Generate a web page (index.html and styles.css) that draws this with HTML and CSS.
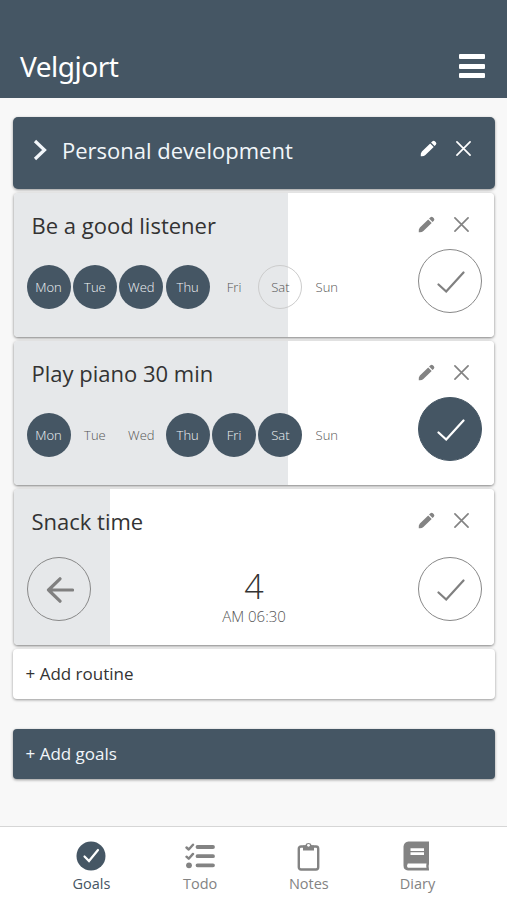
FILE: index.html
```html
<!DOCTYPE html>
<html lang="en">
<head>
<meta charset="utf-8">
<title>Velgjort</title>
<link rel="stylesheet" href="styles.css">
</head>
<body>
<svg class="symbols" aria-hidden="true">
  <symbol id="pencil" viewBox="0 0 18 18"><path d="M.8 17.200Q.4 14 2 12.300L10.800 3.600l3.700 3.700L5.700 16Q4 17.600.8 17.200zM11.700 2.700l1.500-1.500q1.300-1 2.500 0l1.100 1.100q1.100 1.300 0 2.600l-1.400 1.500z" fill="currentColor"/></symbol>
  <symbol id="close" viewBox="0 0 16 16"><path d="M1 1l14 14M15 1L1 15" fill="none" stroke="currentColor" stroke-width="1.800" stroke-linecap="round"/></symbol>
  <symbol id="check" viewBox="0 0 28 22"><path d="M1.500 13.500l7.700 7L26.500 1.500" fill="none" stroke="currentColor" stroke-width="2.200" stroke-linecap="round"/></symbol>
</svg>
<header class="topbar">
  <h1 class="brand">Velgjort</h1>
  <button class="menu" aria-label="Menu"><i></i><i></i><i></i></button>
</header>
<main class="content">
  <section class="goal">
    <svg class="chevron" viewBox="0 0 14 22"><path d="M2 2l9.500 9L2 20" fill="none" stroke="currentColor" stroke-width="3.200"/></svg>
    <h2 class="goal-title">Personal development</h2>
    <div class="actions"><svg class="pencil"><use href="#pencil"/></svg><svg class="close"><use href="#close"/></svg></div>
  </section>

  <article class="card p60">
    <div class="card-head"><h3>Be a good listener</h3><div class="actions"><svg class="pencil"><use href="#pencil"/></svg><svg class="close"><use href="#close"/></svg></div></div>
    <div class="card-body">
      <div class="week"><span class="day on">Mon</span><span class="day on">Tue</span><span class="day on">Wed</span><span class="day on">Thu</span><span class="day">Fri</span><span class="day today">Sat</span><span class="day">Sun</span></div>
      <div class="round"><svg class="check"><use href="#check"/></svg></div>
    </div>
  </article>

  <article class="card p60">
    <div class="card-head"><h3>Play piano 30 min</h3><div class="actions"><svg class="pencil"><use href="#pencil"/></svg><svg class="close"><use href="#close"/></svg></div></div>
    <div class="card-body">
      <div class="week"><span class="day on">Mon</span><span class="day">Tue</span><span class="day">Wed</span><span class="day on">Thu</span><span class="day on">Fri</span><span class="day on">Sat</span><span class="day">Sun</span></div>
      <div class="round done"><svg class="check"><use href="#check"/></svg></div>
    </div>
  </article>

  <article class="card counter p20">
    <div class="card-head"><h3>Snack time</h3><div class="actions"><svg class="pencil"><use href="#pencil"/></svg><svg class="close"><use href="#close"/></svg></div></div>
    <div class="card-body">
      <div class="round"><svg class="back" viewBox="0 0 28 26"><path d="M14 1.800L2.500 13 14 24.200M2.500 13H26.500" fill="none" stroke="currentColor" stroke-width="3.200" stroke-linecap="round" stroke-linejoin="round"/></svg></div>
      <div class="count"><strong>4</strong><span>AM 06:30</span></div>
      <div class="round"><svg class="check"><use href="#check"/></svg></div>
    </div>
  </article>

  <button class="add">+ Add routine</button>
  <button class="add add-goal">+ Add goals</button>
</main>
<nav class="tabs">
  <a class="tab active"><svg viewBox="0 0 30 30"><circle cx="15" cy="15" r="14.500" fill="currentColor"/><path d="M8.500 15.500l4.500 4.500 9-11" fill="none" stroke="#fff" stroke-width="2.200" stroke-linecap="round"/></svg><span>Goals</span></a>
  <a class="tab"><svg viewBox="0 0 30 30"><g fill="none" stroke="currentColor" stroke-linecap="round" stroke-linejoin="round"><path d="M12.500 6H28M12.500 15.200H28M12.500 24.300H28" stroke-width="3.800"/><path d="M1.500 6.500l2.200 2L8 3.700M1.500 15.700l2.200 2L8 12.900" stroke-width="2.400"/></g><circle cx="4" cy="24.300" r="2.900" fill="currentColor"/></svg><span>Todo</span></a>
  <a class="tab"><svg viewBox="0 0 30 30"><rect x="4.800" y="5.500" width="19.400" height="23" rx="2.200" fill="none" stroke="currentColor" stroke-width="2.400"/><path d="M9 4.500h2.200a3.500 3.700 0 0 1 6.600 0h2.200v5h-11z" fill="currentColor"/><circle cx="14.500" cy="4.300" r="1.400" fill="#fff"/></svg><span>Notes</span></a>
  <a class="tab"><svg viewBox="0 0 30 30"><path d="M5.500.5H26v22.500q-.8 1.500 0 5.500v1H5q-4.500-.5-4.500-5V5.500q.5-4.500 5-5z" fill="currentColor"/><path d="M4.800 22.500h18.700q-.5 2.200 0 4.300H4.800q-1.500-2.100 0-4.300zM7.500 7.300h13.500v2.700H7.500zM7.500 11.200h13.500v2.700H7.500z" fill="#fff"/></svg><span>Diary</span></a>
</nav>
</body>
</html>
```
FILE: styles.css
```css
* { box-sizing: border-box; }
body {
  margin: 0;
  height: 900px;
  display: flex;
  flex-direction: column;
  overflow: hidden;
  background: #f8f8f8;
  color: #333;
  font-family: "Open Sans", sans-serif;
}
h1, h2, h3 { margin: 0; font-weight: 400; white-space: nowrap; }
button { border: 0; padding: 0; font: inherit; text-align: left; }
svg { display: block; flex: none; }
.symbols { display: none; }

.topbar {
  height: 98px;
  flex: none;
  background: #455664;
  color: #fff;
  display: flex;
  justify-content: space-between;
  align-items: flex-start;
  padding: 48px 22px 0 20px;
}
.brand { font: 400 28px/36px "Noto Sans", sans-serif; letter-spacing: -0.500px; }
.menu { background: none; width: 26px; display: flex; flex-direction: column; gap: 4.500px; margin-top: 6px; }
.menu i { height: 5px; border-radius: 1px; background: #fff; }

.content { flex: 1; display: flex; flex-direction: column; gap: 4px; padding: 19px 12px 0 13px; }
.goal {
  height: 72px;
  background: #455664;
  color: #f2f6fa;
  border-radius: 5px;
  box-shadow: 0 1px 3px rgba(0,0,0,.4);
  display: flex;
  align-items: flex-start;
  padding: 17px 24px 0 20px;
}
.chevron { width: 14px; height: 22px; margin-top: 5px; }
.goal-title { font-size: 22px; line-height: 32px; margin-left: 15px; flex: 1; }
.actions { display: flex; align-items: center; color: #838383; }
.goal .actions { color: #fff; margin-top: 6px; }
.pencil { width: 17px; height: 17px; }
.close { width: 15px; height: 15px; margin-left: 19px; }

.card {
  height: 144px;
  margin: 0 1px;
  border-radius: 4px;
  background: #fff;
  box-shadow: 0 1px 3px rgba(0,0,0,.5);
}
.p60 { background: linear-gradient(to right, #e6e8ea 274.500px, #fff 274.500px); }
.p20 { background: linear-gradient(to right, #e6e8ea 96px, #fff 96px); }
.counter { height: 156px; }
.card-head { display: flex; justify-content: space-between; align-items: flex-start; padding: 16px 25px 0 17.500px; height: 56px; }
.card-head .actions { margin-top: 7px; }
h3 { font-size: 22px; line-height: 32px; }
.card-body { display: flex; justify-content: space-between; align-items: flex-start; padding: 0 12.500px 0 12.500px; }
.counter .card-body { padding-top: 12px; }
.week { display: flex; gap: 2.400px; padding-top: 16px; }
.day {
  width: 44px;
  height: 44px;
  border-radius: 50%;
  font-size: 13px;
  font-weight: 300;
  line-height: 44px;
  text-align: center;
  color: #555;
}
.on { background: #455664; color: #f0f3f5; }
.today { border: 1px solid #ccc; line-height: 42px; }
.round {
  width: 64px;
  height: 64px;
  border: 1px solid #888;
  border-radius: 50%;
  display: grid;
  place-items: center;
  color: #808080;
}
.done { background: #455664; border-color: #455664; color: #fff; }
.check { width: 28px; height: 22px; margin: 1px 0 0 2px; }
.back { width: 28px; height: 26px; margin: 2px 0 0 2px; }
.count { display: flex; flex-direction: column; align-items: center; padding-top: 10px; }
.count strong { font-size: 34px; line-height: 38px; font-weight: 300; color: #333; }
.count span { font-size: 15px; line-height: 22px; font-weight: 300; color: #555; }

.add {
  height: 50px;
  padding: 0 12.500px 1px;
  border-radius: 4px;
  background: #fff;
  color: #333;
  font-size: 17px;
  box-shadow: 0 1px 3px rgba(0,0,0,.4);
}
.add-goal { margin-top: 26px; background: #455664; color: #f2f6fa; }

.tabs {
  height: 74px;
  flex: none;
  background: #fff;
  border-top: 1px solid #d6d6d6;
  display: grid;
  grid-template-columns: repeat(4, 108.700px);
  justify-content: center;
  padding-left: 2px;
}
.tab { display: flex; flex-direction: column; align-items: center; padding-top: 14px; color: #838383; }
.tab svg { width: 30px; height: 30px; }
.tab span { font-size: 14.500px; line-height: 22px; margin-top: 2px; }
.active { color: #455664; }
.active span { font-weight: 500; }
```
